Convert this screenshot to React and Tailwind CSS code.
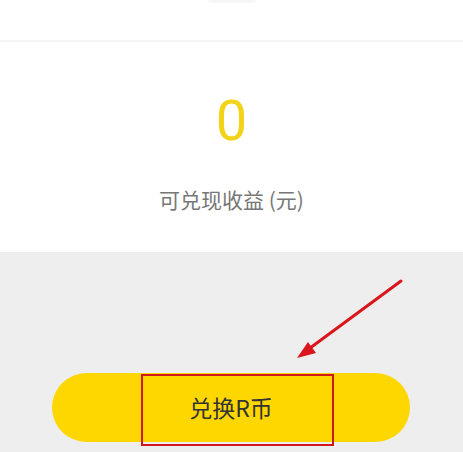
export default function App() {
  return (
    <div className="w-[463px] h-[452px] overflow-hidden bg-white flex flex-col" style={{ fontFamily: '"Noto Sans CJK SC", "Noto Sans", sans-serif' }}>
      <div className="h-[40px] shrink-0 bg-white flex justify-center">
        <div className="w-[48px] h-[3px] bg-[#f7f7f7] rounded-b" />
      </div>
      <div className="h-[2px] shrink-0 bg-[#f4f4f4] shadow-[0_1px_2px_rgba(0,0,0,0.03)]" />
      <div className="h-[210px] shrink-0 bg-white flex flex-col items-center">
        <div className="mt-[52px] h-[54px] flex items-center text-[56px] leading-none font-normal text-[#f3d318]" style={{ fontFamily: 'Roboto, "Noto Sans", sans-serif' }}>0</div>
        <div className="mt-[37px] text-[21px] leading-[28px] text-[#777777]">可兑现收益 (元)</div>
      </div>
      <div className="relative flex-1 bg-[#eeeeee] flex flex-col">
        <svg className="absolute left-0 top-0" width="463" height="200" viewBox="0 252 463 200">
          <line x1="401" y1="281" x2="306" y2="351" stroke="#d9161c" strokeWidth="3" strokeLinecap="round" />
          <polygon points="297,358 308,342 316,353" fill="#d9161c" />
        </svg>
        <div className="mt-[121px] ml-[52px] w-[358px] h-[69px] rounded-full bg-[#fed700] flex items-center justify-center">
          <span className="text-[23px] leading-none text-[#333333]">兑换R币</span>
        </div>
        <div className="absolute left-[141px] top-[122px] w-[193px] h-[72px] border-[2.5px] border-[#d0171d]" />
      </div>
    </div>
  );
}
